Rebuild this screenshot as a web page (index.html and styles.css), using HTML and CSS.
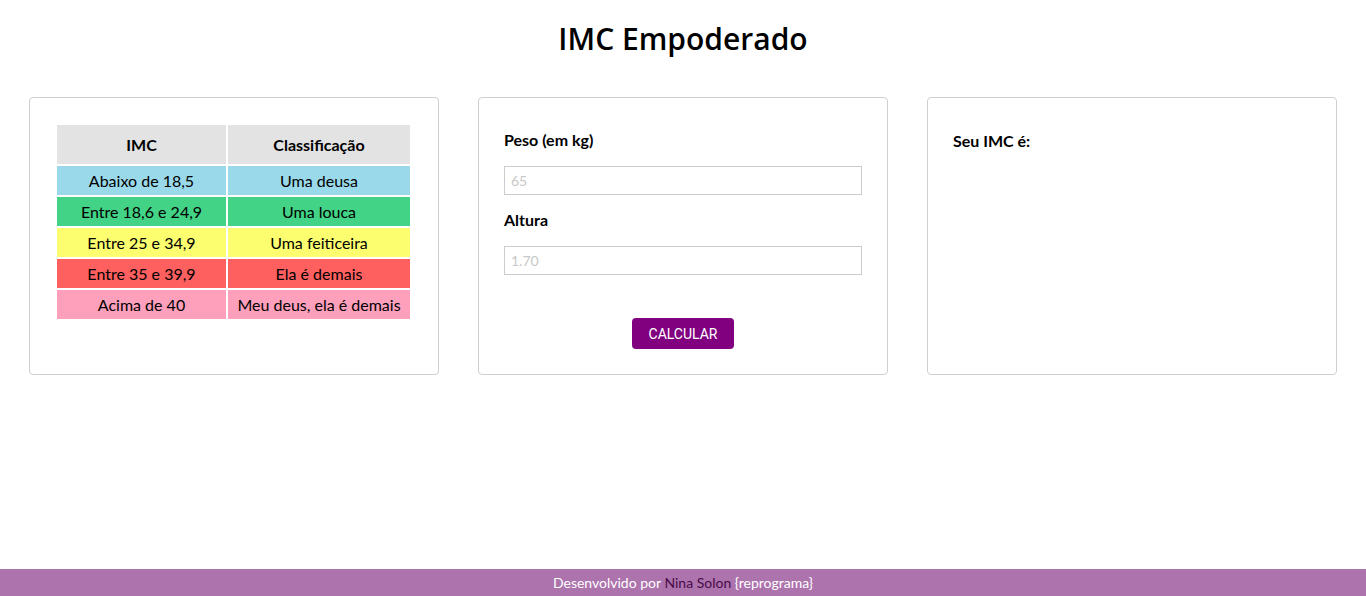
FILE: index.html
```html
<!DOCTYPE html>
<html lang="pt-BR">
<head>
<meta charset="utf-8">
<title>IMC Empoderado</title>
<link rel="stylesheet" href="styles.css">
</head>
<body>
<main class="page">
  <h1 class="title">IMC Empoderado</h1>
  <section class="cards">
    <div class="card card-table">
      <table class="imc-table">
        <colgroup><col class="col-a"><col class="col-b"></colgroup>
        <thead>
          <tr><th>IMC</th><th>Classificação</th></tr>
        </thead>
        <tbody>
          <tr class="r-blue"><td>Abaixo de 18,5</td><td>Uma deusa</td></tr>
          <tr class="r-green"><td>Entre 18,6 e 24,9</td><td>Uma louca</td></tr>
          <tr class="r-yellow"><td>Entre 25 e 34,9</td><td>Uma feiticeira</td></tr>
          <tr class="r-red"><td>Entre 35 e 39,9</td><td>Ela é demais</td></tr>
          <tr class="r-pink"><td>Acima de 40</td><td>Meu deus, ela é demais</td></tr>
        </tbody>
      </table>
    </div>
    <div class="card card-form">
      <label class="label" for="peso">Peso (em kg)</label>
      <input class="input" id="peso" type="text" placeholder="65">
      <label class="label" for="altura">Altura</label>
      <input class="input" id="altura" type="text" placeholder="1.70">
      <div class="actions"><button class="btn" type="button">CALCULAR</button></div>
    </div>
    <div class="card card-result">
      <p class="result-label">Seu IMC é:</p>
    </div>
  </section>
</main>
<footer class="footer">Desenvolvido por <span class="author">Nina Solon</span> {reprograma}</footer>
</body>
</html>
```

FILE: styles.css
```css
* { box-sizing: border-box; }
html, body { margin: 0; padding: 0; }
body {
  font-family: Lato, "Liberation Sans", sans-serif;
  color: #000;
  background: #fff;
  min-height: 100vh;
  display: flex;
  flex-direction: column;
}
.page { flex: 1; }
.title {
  font-family: "Open Sans", "Noto Sans", sans-serif;
  font-weight: 600;
  font-size: 30px;
  text-align: center;
  margin: 0;
  padding-top: 16px;
  line-height: 45px;
}
.cards {
  display: flex;
  gap: 39px;
  padding: 36px 29px 0;
}
.card {
  width: 410px;
  height: 278px;
  border: 1px solid #cfcfcf;
  border-radius: 4px;
  padding: 25px;
}
.card-table { padding-right: 26px; }
.imc-table {
  width: 100%;
  border-spacing: 2px;
  font-size: 16px;
  text-align: center;
}
.col-a { width: 169px; }
.imc-table th {
  background: #e3e3e3;
  font-weight: 700;
  height: 39px;
  padding: 0;
}
.imc-table td {
  height: 29px;
  padding: 0 8px;
  line-height: 19px;
}
.r-blue td { background: #9ad9ea; }
.r-green td { background: #42d386; }
.r-yellow td { background: #fdfd70; }
.r-red td { background: #fe5f5f; }
.r-pink td { background: #fe9fbb; }
.card-form { display: flex; flex-direction: column; padding-top: 32px; }
.label {
  font-weight: 700;
  font-size: 16px;
  line-height: 20px;
  display: block;
  margin-bottom: 16px;
}
.input {
  width: 358px;
  height: 29px;
  flex: none;
  border: 1px solid #cccccc;
  border-radius: 0;
  padding: 0 6px;
  font-family: Lato, sans-serif;
  font-size: 14px;
  margin: 0 0 15px;
  outline: none;
}
.input::placeholder { color: #c8c8c8; }
.actions { display: flex; justify-content: center; margin-top: 28px; }
.btn {
  background: #800080;
  color: #fff;
  border: none;
  border-radius: 4px;
  font-family: Roboto, "Liberation Sans", sans-serif;
  font-size: 14px;
  width: 102px;
  height: 31px;
  padding: 0;
  cursor: pointer;
}
.card-result { padding-top: 33px; }
.result-label {
  margin: 0;
  font-weight: 700;
  font-size: 16px;
  line-height: 20px;
}
.footer {
  background: #ad73ad;
  color: #fff;
  text-align: center;
  font-size: 14px;
  height: 27px;
  line-height: 27px;
}
.author { color: #4a0a4a; }
```
